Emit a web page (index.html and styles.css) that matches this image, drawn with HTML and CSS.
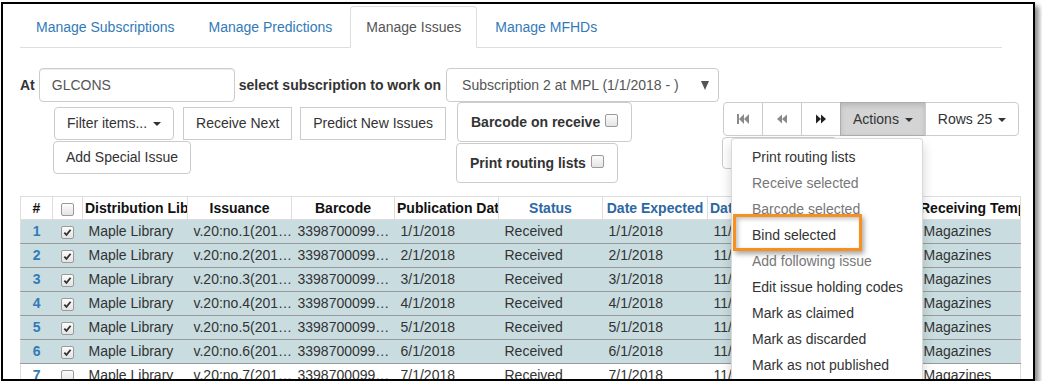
FILE: index.html
```html
<!DOCTYPE html>
<html lang="en">
<head>
    <meta charset="UTF-8">
    <meta name="viewport" content="width=device-width, initial-scale=1.0">
    <title>Manage Issues</title>
    <link rel="stylesheet" href="styles.css">
</head>
<body>
    <div class="frame">
        <div class="page">
            <ul class="nav-tabs">
                <li><a href="#">Manage Subscriptions</a></li>
                <li><a href="#">Manage Predictions</a></li>
                <li class="active"><a href="#">Manage Issues</a></li>
                <li><a href="#">Manage MFHDs</a></li>
            </ul>

            <div class="sub-row">
                <label class="label-at">At</label>
                <input type="text" class="form-control lib-input" value="GLCONS">
                <label class="label-sub">select subscription to work on</label>
                <div class="form-control sub-select">
                    <span>Subscription 2 at MPL (1/1/2018 - )</span>
                    <span class="select-arrow"></span>
                </div>
            </div>

            <div class="toolbar">
                <div class="left-actions">
                    <div class="btn-row">
                        <button class="btn btn-filter">Filter items... <span class="caret"></span></button>
                        <button class="btn btn-square btn-receive">Receive Next</button>
                        <button class="btn btn-square btn-predict">Predict New Issues</button>
                    </div>
                    <div class="btn-row">
                        <button class="btn">Add Special Issue</button>
                    </div>
                </div>

                <div class="options">
                    <label class="option-box first">Barcode on receive <span class="cb"></span></label>
                    <label class="option-box">Print routing lists <span class="cb"></span></label>
                </div>

                <div class="pager-wrap">
                    <div class="btn-group">
                        <button class="btn btn-icon">
                            <svg width="14" height="14" viewBox="0 0 14 14"><rect x="1" y="2" width="2" height="10" fill="#8a8a8a"/><polygon points="3,7 8,2 8,12" fill="#8a8a8a"/><polygon points="8,7 13,2 13,12" fill="#8a8a8a"/></svg>
                        </button>
                        <button class="btn btn-icon">
                            <svg width="14" height="14" viewBox="0 0 14 14"><polygon points="2,7 7,2.5 7,11.5" fill="#8a8a8a"/><polygon points="7,7 12,2.5 12,11.5" fill="#8a8a8a"/></svg>
                        </button>
                        <button class="btn btn-icon">
                            <svg width="14" height="14" viewBox="0 0 14 14"><polygon points="12,7 7,2.5 7,11.5" fill="#222"/><polygon points="7,7 2,2.5 2,11.5" fill="#222"/></svg>
                        </button>
                        <button class="btn btn-open">Actions <span class="caret"></span></button>
                        <button class="btn">Rows 25 <span class="caret"></span></button>
                    </div>
                    <div class="btn-group sub-group">
                        <button class="btn sub-a"></button>
                        <button class="btn sub-b"></button>
                    </div>

                    <ul class="dropdown-menu">
                        <li>Print routing lists</li>
                        <li class="disabled">Receive selected</li>
                        <li class="disabled">Barcode selected</li>
                        <li>Bind selected</li>
                        <li class="disabled">Add following issue</li>
                        <li>Edit issue holding codes</li>
                        <li>Mark as claimed</li>
                        <li>Mark as discarded</li>
                        <li>Mark as not published</li>
                        <li>Delete selected</li>
                    </ul>
                    <div class="mark"></div>
                </div>
            </div>

            <table class="grid">
                <colgroup>
                    <col style="width:32px"><col style="width:30px"><col style="width:105px">
                    <col style="width:104px"><col style="width:103px"><col style="width:104px">
                    <col style="width:104px"><col style="width:105px"><col style="width:105px">
                    <col style="width:105px"><col style="width:103px">
                </colgroup>
                <thead>
                    <tr>
                        <th>#</th>
                        <th><span class="cb"></span></th>
                        <th class="clip">Distribution Library</th>
                        <th>Issuance</th>
                        <th>Barcode</th>
                        <th class="clip">Publication Date</th>
                        <th class="sort">Status</th>
                        <th class="sort">Date Expected</th>
                        <th class="sort clip">Date Received</th>
                        <th>Notes</th>
                        <th class="clip">Receiving Template</th>
                    </tr>
                </thead>
                <tbody>
                    <tr class="sel">
                        <td class="num">1</td>
                        <td class="check"><span class="cb"><svg width="9" height="9" viewBox="0 0 9 9"><path d="M1.3 4.6 L3.5 6.9 L7.6 1.7" fill="none" stroke="#333" stroke-width="1.8"/></svg></span></td>
                        <td>Maple Library</td><td>v.20:no.1(201…</td><td>3398700099…</td>
                        <td>1/1/2018</td><td>Received</td><td>1/1/2018</td><td>11/16/2018</td><td></td><td>Magazines</td>
                    </tr>
                    <tr class="sel">
                        <td class="num">2</td>
                        <td class="check"><span class="cb"><svg width="9" height="9" viewBox="0 0 9 9"><path d="M1.3 4.6 L3.5 6.9 L7.6 1.7" fill="none" stroke="#333" stroke-width="1.8"/></svg></span></td>
                        <td>Maple Library</td><td>v.20:no.2(201…</td><td>3398700099…</td>
                        <td>2/1/2018</td><td>Received</td><td>2/1/2018</td><td>11/16/2018</td><td></td><td>Magazines</td>
                    </tr>
                    <tr class="sel">
                        <td class="num">3</td>
                        <td class="check"><span class="cb"><svg width="9" height="9" viewBox="0 0 9 9"><path d="M1.3 4.6 L3.5 6.9 L7.6 1.7" fill="none" stroke="#333" stroke-width="1.8"/></svg></span></td>
                        <td>Maple Library</td><td>v.20:no.3(201…</td><td>3398700099…</td>
                        <td>3/1/2018</td><td>Received</td><td>3/1/2018</td><td>11/16/2018</td><td></td><td>Magazines</td>
                    </tr>
                    <tr class="sel">
                        <td class="num">4</td>
                        <td class="check"><span class="cb"><svg width="9" height="9" viewBox="0 0 9 9"><path d="M1.3 4.6 L3.5 6.9 L7.6 1.7" fill="none" stroke="#333" stroke-width="1.8"/></svg></span></td>
                        <td>Maple Library</td><td>v.20:no.4(201…</td><td>3398700099…</td>
                        <td>4/1/2018</td><td>Received</td><td>4/1/2018</td><td>11/16/2018</td><td></td><td>Magazines</td>
                    </tr>
                    <tr class="sel">
                        <td class="num">5</td>
                        <td class="check"><span class="cb"><svg width="9" height="9" viewBox="0 0 9 9"><path d="M1.3 4.6 L3.5 6.9 L7.6 1.7" fill="none" stroke="#333" stroke-width="1.8"/></svg></span></td>
                        <td>Maple Library</td><td>v.20:no.5(201…</td><td>3398700099…</td>
                        <td>5/1/2018</td><td>Received</td><td>5/1/2018</td><td>11/16/2018</td><td></td><td>Magazines</td>
                    </tr>
                    <tr class="sel">
                        <td class="num">6</td>
                        <td class="check"><span class="cb"><svg width="9" height="9" viewBox="0 0 9 9"><path d="M1.3 4.6 L3.5 6.9 L7.6 1.7" fill="none" stroke="#333" stroke-width="1.8"/></svg></span></td>
                        <td>Maple Library</td><td>v.20:no.6(201…</td><td>3398700099…</td>
                        <td>6/1/2018</td><td>Received</td><td>6/1/2018</td><td>11/16/2018</td><td></td><td>Magazines</td>
                    </tr>
                    <tr>
                        <td class="num">7</td>
                        <td class="check"><span class="cb"></span></td>
                        <td>Maple Library</td><td>v.20:no.7(201…</td><td>3398700099…</td>
                        <td>7/1/2018</td><td>Received</td><td>7/1/2018</td><td>11/16/2018</td><td></td><td>Magazines</td>
                    </tr>
                </tbody>
            </table>
        </div>
    </div>
</body>
</html>
```

FILE: styles.css
```css
body {
    margin: 0;
    font-family: "Liberation Sans", Arial, sans-serif;
    font-size: 14px;
    color: #333;
    background-color: #fff;
}

/* screenshot frame */
.frame {
    width: 1030px;
    height: 375px;
    margin: 2px 0 0 1px;
    border: 2px solid #000;
    box-shadow: 4px 4px 5px rgba(0, 0, 0, 0.45);
    overflow: hidden;
    background-color: #fff;
}

.page {
    padding: 2px 0 0 17px;
}

.nav-tabs {
    display: flex;
    list-style: none;
    margin: 0;
    padding: 0;
    width: 982px;
    border-bottom: 1px solid #ddd;
}

.nav-tabs li {
    margin: 0 2px -1px 0;
}

.nav-tabs a {
    display: block;
    padding: 10px 15px;
    line-height: 20px;
    border: 1px solid transparent;
    border-radius: 4px 4px 0 0;
    color: #337ab7;
    text-decoration: none;
}

.nav-tabs .active a {
    color: #555;
    background-color: #fff;
    border-color: #ddd #ddd transparent;
}

.sub-row {
    display: flex;
    align-items: center;
    margin-top: 20px;
}

.label-at,
.label-sub {
    font-weight: bold;
}

.form-control {
    box-sizing: border-box;
    height: 34px;
    padding: 6px 12px;
    font-family: inherit;
    font-size: 14px;
    line-height: 20px;
    color: #555;
    background-color: #fff;
    border: 1px solid #ccc;
    border-radius: 4px;
    box-shadow: inset 0 1px 1px rgba(0, 0, 0, 0.075);
}

.lib-input {
    width: 196px;
    margin-left: 4px;
}

.label-sub {
    margin-left: 4px;
}

.sub-select {
    display: flex;
    align-items: center;
    justify-content: space-between;
    width: 273px;
    margin-left: 5px;
    padding: 6px 9px 6px 15px;
    box-shadow: none;
}

.select-arrow {
    width: 0;
    height: 0;
    border-top: 9px solid #555;
    border-left: 4px solid transparent;
    border-right: 4px solid transparent;
}

.toolbar {
    display: flex;
    align-items: flex-start;
}

.btn {
    font-family: inherit;
    font-size: 14px;
    line-height: 19px;
    color: #333;
    background-color: #fff;
    border: 1px solid #ccc;
    border-radius: 4px;
    padding: 6px 12px;
    white-space: nowrap;
    cursor: pointer;
}

.btn-square {
    border-radius: 0;
}

.caret {
    display: inline-block;
    width: 0;
    height: 0;
    margin-left: 2px;
    vertical-align: middle;
    border-top: 4px solid #333;
    border-left: 4px solid transparent;
    border-right: 4px solid transparent;
}

.left-actions {
    width: 393px;
    margin: 5px 0 0 33px;
}

.btn-row {
    display: flex;
    margin-bottom: 1px;
}

.btn-filter {
    margin-left: 1px;
}

.btn-receive {
    margin-left: 9px;
}

.btn-predict {
    margin-left: 8px;
}

.options {
    display: flex;
    flex-direction: column;
    align-items: flex-start;
    width: 173px;
    margin-left: 10px;
}

.option-box {
    display: flex;
    align-items: center;
    height: 40px;
    box-sizing: border-box;
    padding: 0 13px 0 13px;
    margin-bottom: 1px;
    font-weight: bold;
    white-space: nowrap;
    border: 1px solid #ccc;
    border-radius: 4px;
}

.option-box.first {
    margin-left: 1px;
}

.option-box .cb {
    flex-shrink: 0;
    margin: -4px 0 0 5px;
}

.cb {
    display: inline-flex;
    align-items: center;
    justify-content: center;
    box-sizing: border-box;
    width: 13px;
    height: 13px;
    border: 1px solid #9a9a9a;
    border-radius: 2px;
    background: linear-gradient(#fcfcfc, #e4e4e4);
    vertical-align: middle;
}

.pager-wrap {
    position: relative;
    margin-left: 94px;
}

.btn-group {
    display: flex;
}

.btn-group .btn {
    line-height: 20px;
    border-radius: 0;
    margin-left: -1px;
}

.btn-group .btn:first-child {
    margin-left: 0;
    border-radius: 4px 0 0 4px;
}

.btn-group .btn:last-child {
    border-radius: 0 4px 4px 0;
}

.btn-icon {
    display: flex;
    align-items: center;
    height: 34px;
}

.btn-open {
    background-color: #d4d4d4;
    border-color: #adadad;
    box-shadow: inset 0 3px 5px rgba(0, 0, 0, 0.125);
}

.sub-group {
    margin: 1px 0 0 -1px;
}

.sub-group .btn {
    height: 32px;
}

.sub-a {
    width: 82px;
}

.sub-b {
    width: 34px;
}

.dropdown-menu {
    position: absolute;
    top: 36px;
    left: 8px;
    z-index: 10;
    width: 190px;
    margin: 0;
    padding: 5px 0;
    list-style: none;
    background-color: #fff;
    border: 1px solid rgba(0, 0, 0, 0.15);
    border-radius: 4px;
    box-shadow: 0 6px 12px rgba(0, 0, 0, 0.175);
}

.dropdown-menu li {
    padding: 3px 20px;
    line-height: 20px;
    white-space: nowrap;
    color: #333;
}

.dropdown-menu li.disabled {
    color: #777;
}

/* orange callout around "Bind selected" */
.mark {
    position: absolute;
    top: 112px;
    left: 10px;
    z-index: 11;
    width: 129px;
    height: 37px;
    box-sizing: border-box;
    border: 3px solid #f7901e;
    box-shadow: 2px 3px 5px rgba(0, 0, 0, 0.35), inset 2px 2px 4px rgba(0, 0, 0, 0.25);
}

.grid {
    margin-top: 12px;
    width: 1000px;
    table-layout: fixed;
    border-collapse: collapse;
    border-left: 1px solid #ddd;
    border-right: 1px solid #ddd;
}

.grid th {
    padding: 1px 2px;
    line-height: 20px;
    font-weight: bold;
    color: #111;
    text-align: center;
    white-space: nowrap;
    overflow: hidden;
    border: 1px solid #ddd;
}

.grid th.clip {
    text-align: left;
}

.grid th.sort {
    color: #2c67a3;
}

.grid td {
    padding: 2px 2px 2px 6px;
    line-height: 19px;
    white-space: nowrap;
    overflow: hidden;
    border-bottom: 1px solid #9a9a9a;
}

.grid tr.sel td {
    background-color: #c9dde0;
}

.grid td.num {
    padding: 2px 0;
    text-align: center;
    font-weight: bold;
    color: #337ab7;
}

.grid td.check {
    padding: 2px 0;
    text-align: center;
}
```
